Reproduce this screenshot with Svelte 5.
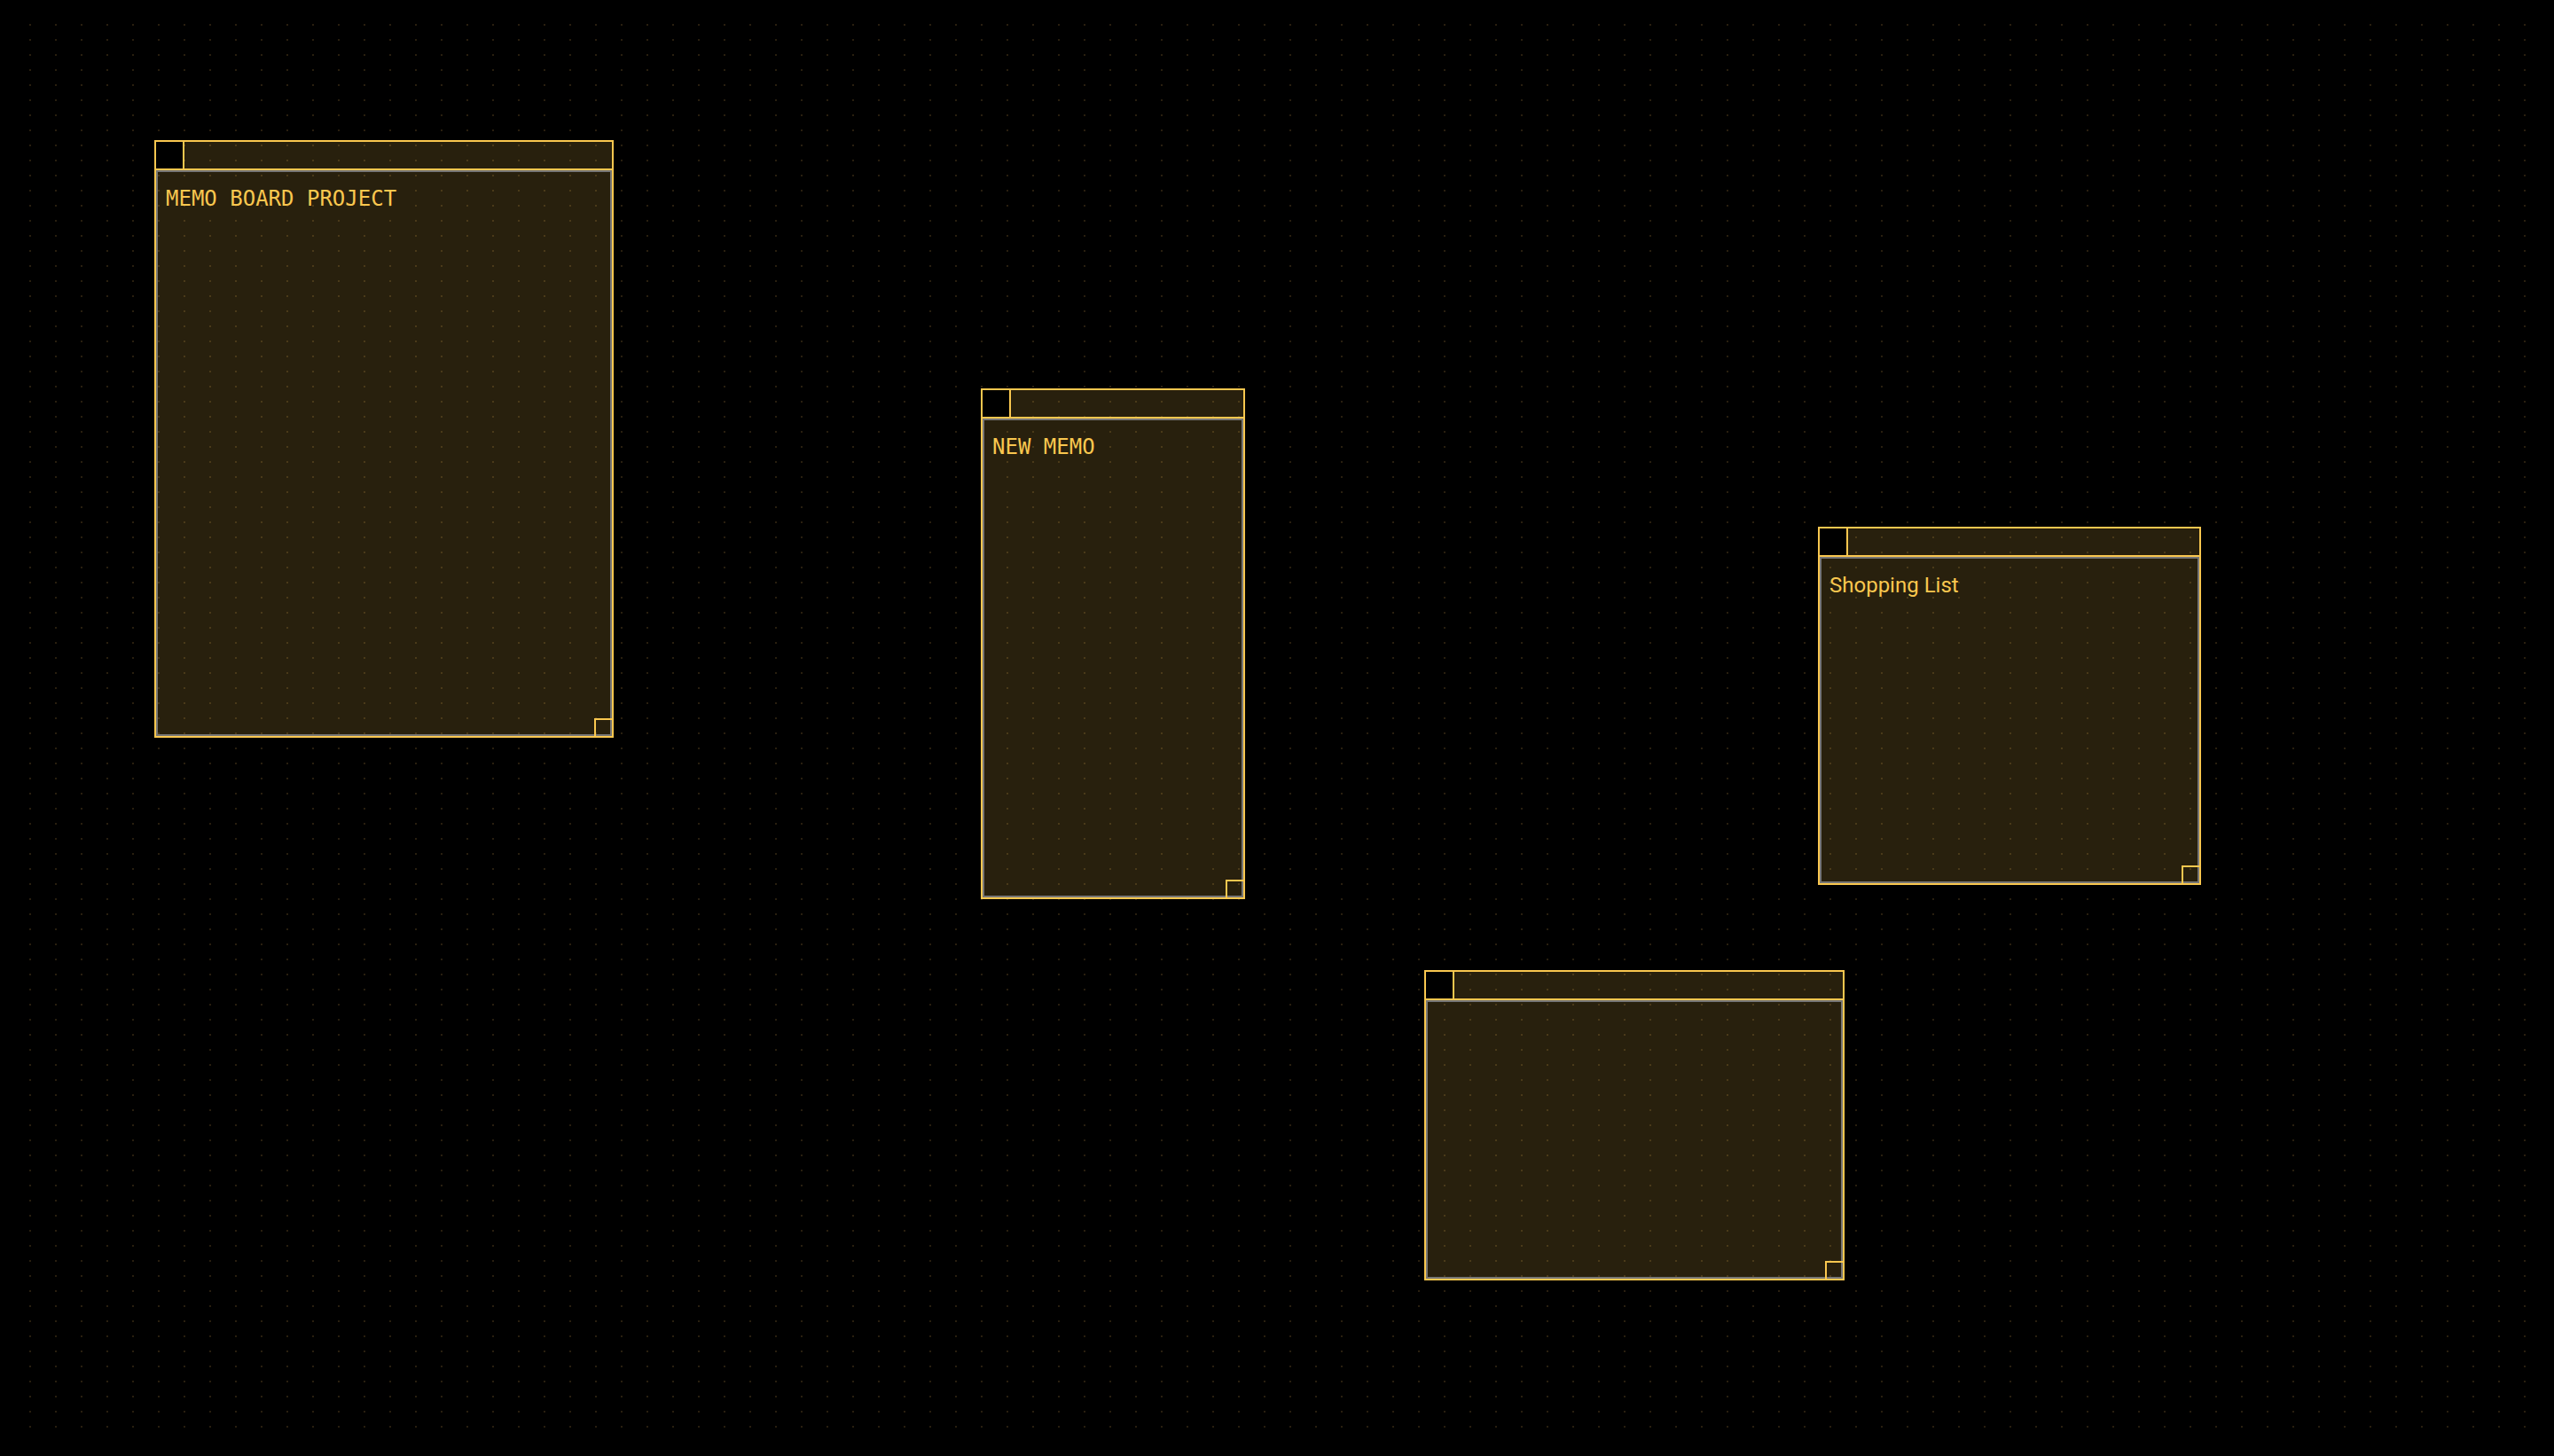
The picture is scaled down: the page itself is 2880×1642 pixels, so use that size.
<script>
  let memos = $state([
    { id: 1, x: 174, y: 158, width: 518, height: 674, text: 'MEMO BOARD PROJECT' },
    { id: 2, x: 1106, y: 438, width: 298, height: 576, text: 'NEW MEMO' },
    { id: 3, x: 2050, y: 594, width: 432, height: 404, text: 'Shopping List' },
    { id: 4, x: 1606, y: 1094, width: 474, height: 350, text: '' }
  ]);

  const isCaps = (text) => text === text.toUpperCase();
  const remove = (id) => (memos = memos.filter((m) => m.id !== id));
</script>

<main class="board">
  {#each memos as memo (memo.id)}
    <section
      class="memo"
      style="left: {memo.x}px; top: {memo.y}px; width: {memo.width}px; height: {memo.height}px"
    >
      <header class="bar">
        <button class="close" type="button" aria-label="Delete memo" onclick={() => remove(memo.id)}></button>
      </header>
      <textarea
        class="text"
        class:caps={isCaps(memo.text)}
        aria-label="Memo text"
        spellcheck="false"
        bind:value={memo.text}
      ></textarea>
      <button class="resize" type="button" aria-label="Resize memo"></button>
    </section>
  {/each}
</main>

<style>
  :global(body) {
    background: #000;
  }

  .board {
    --amber: #f9c74f;
    position: relative;
    box-sizing: border-box;
    min-height: 100vh;
    padding: 27px 31px 31px 33px;
    overflow: hidden;
    /* one 2px dot in the top left corner of every tile */
    background-image: conic-gradient(from 270deg at 2px 2px, #291f0f 90deg, transparent 90deg);
    background-size: 29px 17px;
    background-origin: content-box;
    background-clip: content-box;
  }

  .memo {
    position: absolute;
    box-sizing: border-box;
    display: flex;
    flex-direction: column;
    border: 2px solid var(--amber);
    background: rgba(249, 199, 79, 0.16);
  }

  .bar {
    flex: none;
    display: flex;
    height: 30px;
    border-bottom: 2px solid var(--amber);
  }

  .close {
    box-sizing: border-box;
    width: 32px;
    height: 30px;
    padding: 0;
    border: 0;
    border-right: 2px solid var(--amber);
    border-radius: 0;
    background: #000;
  }

  .text {
    flex: 1;
    box-sizing: border-box;
    width: 100%;
    min-height: 0;
    margin: 0;
    padding: 16px 9px;
    border: 2px solid #767676;
    border-radius: 0;
    outline: 0;
    resize: none;
    background: transparent;
    color: var(--amber);
    font: 24px/28px Roboto, sans-serif;
  }

  .text.caps {
    font-family: 'DejaVu Sans Mono', monospace;
  }

  .resize {
    position: absolute;
    right: -2px;
    bottom: -2px;
    box-sizing: border-box;
    width: 22px;
    height: 22px;
    padding: 0;
    border: 2px solid var(--amber);
    border-radius: 0;
    background: transparent;
  }
</style>
